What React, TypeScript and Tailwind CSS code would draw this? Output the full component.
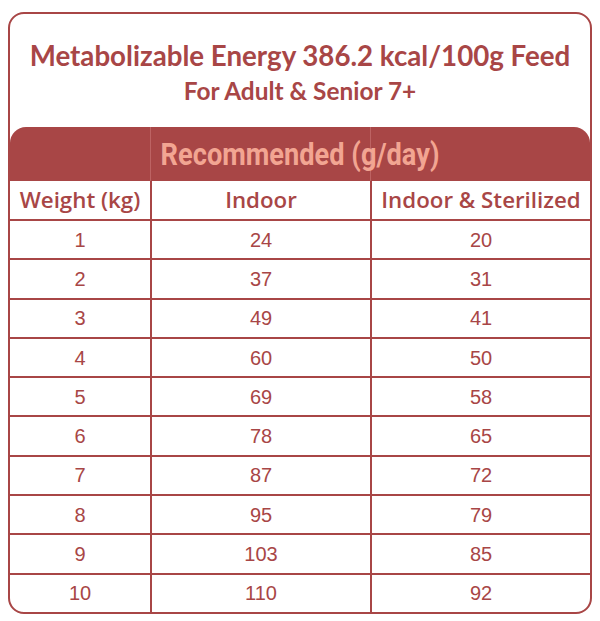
const ROWS: [number, number, number][] = [
  [1, 24, 20],
  [2, 37, 31],
  [3, 49, 41],
  [4, 60, 50],
  [5, 69, 58],
  [6, 78, 65],
  [7, 87, 72],
  [8, 95, 79],
  [9, 103, 85],
  [10, 110, 92],
]

export default function App() {
  return (
    <div className="w-[600px] h-[621px] bg-white pt-[12px] px-[8px]">
      <div className="h-[602px] border-2 border-[#a84646] rounded-[16px] flex flex-col overflow-hidden">
        {/* Title */}
        <div className="h-[113px] shrink-0 pt-[25px] text-center text-[#a84646] font-['Lato',sans-serif] font-bold">
          <p className="text-[27.7px] leading-[34px]">Metabolizable Energy 386.2 kcal/100g Feed</p>
          <p className="text-[24.4px] leading-[30px] mt-[3px]">For Adult &amp; Senior 7+</p>
        </div>

        {/* Band */}
        <div className="relative h-[54px] shrink-0 bg-[#a84646] rounded-t-[16px] grid grid-cols-[141px_220px_1fr]">
          <div className="border-r border-[#bd6363]" />
          <div className="border-r border-[#bd6363] ml-[1px]" />
          <div />
          <div className="absolute inset-0 flex items-center justify-center">
            <span className="inline-block scale-x-[0.85] text-[32px] leading-none font-bold text-[#f2a592] font-['Roboto',sans-serif] whitespace-nowrap">
              Recommended (g/day)
            </span>
          </div>
        </div>

        {/* Header row */}
        <div className="h-[38px] shrink-0 grid grid-cols-[142px_220px_1fr] text-[#a84646] font-['Open_Sans',sans-serif] font-semibold text-[22.3px]">
          <div className="border-r-2 border-[#a84646] flex items-center justify-center">Weight (kg)</div>
          <div className="border-r-2 border-[#a84646] flex items-center justify-center">Indoor</div>
          <div className="flex items-center justify-center">Indoor &amp; Sterilized</div>
        </div>

        {/* Data rows */}
        {ROWS.map(([w, a, b]) => (
          <div key={w} className="h-[39.3px] shrink-0 border-t-2 border-[#a84646] grid grid-cols-[142px_220px_1fr] text-[#a84646] font-['Liberation_Sans',sans-serif] text-[20px]">
            <div className="border-r-2 border-[#a84646] flex items-center justify-center">{w}</div>
            <div className="border-r-2 border-[#a84646] flex items-center justify-center">{a}</div>
            <div className="flex items-center justify-center">{b}</div>
          </div>
        ))}
      </div>
    </div>
  )
}
